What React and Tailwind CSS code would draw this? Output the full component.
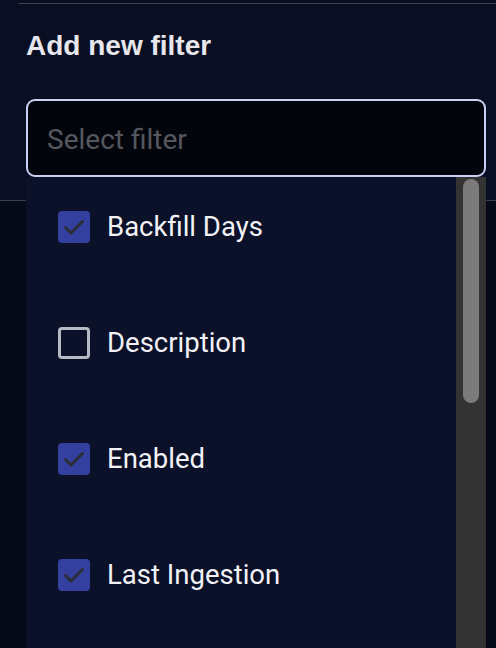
import React, { useState } from 'react'

const filters = [
    { id: 'backfill', label: 'Backfill Days', checked: true },
    { id: 'description', label: 'Description', checked: false },
    { id: 'enabled', label: 'Enabled', checked: true },
    { id: 'lastIngestion', label: 'Last Ingestion', checked: true },
];

const CheckBox = ({ checked }) => {
    if (checked) {
        return (
            <span className="w-8 h-8 rounded-[4px] bg-[#3440a0] flex items-center justify-center shrink-0">
                <svg className="w-[24px] h-[24px]" viewBox="0 0 24 24" fill="none">
                    <path d="M3.5 12.5l5.5 5.5L20.5 6.5" stroke="#2b2c36" strokeWidth="3" strokeLinecap="round" strokeLinejoin="round" />
                </svg>
            </span>
        );
    }
    return <span className="w-8 h-8 rounded-[4px] border-[3px] border-[#b7b9c3] shrink-0"></span>;
};

const App = () => {
    const [items, setItems] = useState(filters);

    const toggle = (id) => {
        setItems(prev => prev.map(f => f.id === id ? { ...f, checked: !f.checked } : f));
    };

    return (
        <div className="relative w-[496px] h-[648px] overflow-hidden bg-[#060918]" style={{ fontFamily: 'Roboto, "Liberation Sans", sans-serif' }}>
            {/* header section */}
            <div className="h-[201px] bg-[#0a0e22] border-b border-[#3c3f4c] flex flex-col">
                <div className="mt-[3px] ml-[18px] h-px bg-[#3c3f4c]"></div>
                <h2 className="ml-[26px] mt-[28px] text-[28px] leading-[28px] font-bold text-[#e6e6ec]" style={{ fontFamily: '"Liberation Sans", Arial, sans-serif' }}>
                    Add new filter
                </h2>
                <div className="ml-[26px] mt-[39px] w-[460px] h-[78px] rounded-[9px] border-2 border-[#c8d0f4] bg-[#03050d] flex items-center px-[19px] pt-[3px]">
                    <span className="text-[28px] text-[#55575f]">Select filter</span>
                </div>
            </div>

            {/* dropdown */}
            <div className="absolute left-[26px] top-[177px] w-[460px] h-[480px] flex bg-[#0b1129]">
                <ul className="flex-1 flex flex-col">
                    {items.map(f => (
                        <li
                            key={f.id}
                            onClick={() => toggle(f.id)}
                            className="h-[116px] shrink-0 pt-[34px] pl-[32px] flex items-start gap-[17px] cursor-pointer"
                        >
                            <CheckBox checked={f.checked} />
                            <span className="text-[27.5px] leading-[32px] text-[#f2f2f6]">{f.label}</span>
                        </li>
                    ))}
                </ul>
                <div className="w-[30px] bg-[#333333] flex justify-center">
                    <div className="mt-[2px] w-4 h-[224px] rounded-full bg-[#7b7b7b]"></div>
                </div>
            </div>
        </div>
    )
}

export default App
